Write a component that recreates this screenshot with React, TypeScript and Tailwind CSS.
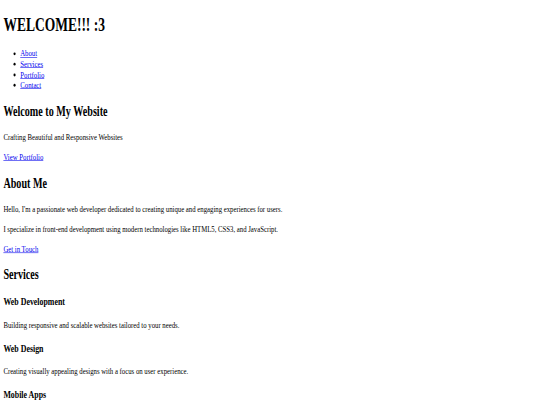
import React from "react";

const serif = { fontFamily: '"Liberation Serif", "Times New Roman", serif' };

export default function App() {
  const link = "text-[#0000EE] underline";
  const p = "text-base leading-[18.4px]";
  const h2 = "text-2xl font-bold leading-[27.6px]";
  const h3 = "text-[18.72px] font-bold leading-[21.5px]";
  return (
    <div className="w-[540px] h-[405px] overflow-hidden bg-white">
      <div
        className="w-[1280px] flow-root origin-top-left scale-x-[0.421875] scale-y-[0.57] text-black"
        style={serif}
      >
        <div className="px-2">
          <h1 className="text-[32px] font-bold leading-[36.8px] mt-[26.4px]">WELCOME!!! :3</h1>
          <nav>
            <ul className="list-disc pl-10 mt-[21.7px] text-base leading-[18.4px]">
              <li><a href="#about" className={link}>About</a></li>
              <li><a href="#services" className={link}>Services</a></li>
              <li><a href="#portfolio" className={link}>Portfolio</a></li>
              <li><a href="#contact" className={link}>Contact</a></li>
            </ul>
          </nav>
          <section>
            <h2 className={`${h2} mt-[23.15px]`}>Welcome to My Website</h2>
            <p className={`${p} mt-[22.3px]`}>Crafting Beautiful and Responsive Websites</p>
            <p className={`${p} mt-[16.15px]`}><a href="#portfolio" className={link}>View Portfolio</a></p>
          </section>
          <section>
            <h2 className={`${h2} mt-[24.5px]`}>About Me</h2>
            <p className={`${p} mt-[21.75px]`}>Hello, I'm a passionate web developer dedicated to creating unique and engaging experiences for users.</p>
            <p className={`${p} mt-[16px]`}>I specialize in front-end development using modern technologies like HTML5, CSS3, and JavaScript.</p>
            <p className={`${p} mt-[16.7px]`}><a href="#contact" className={link}>Get in Touch</a></p>
          </section>
          <section>
            <h2 className={`${h2} mt-[22.8px]`}>Services</h2>
            <div>
              <h3 className={`${h3} mt-[21.05px]`}>Web Development</h3>
              <p className={`${p} mt-[22.1px]`}>Building responsive and scalable websites tailored to your needs.</p>
            </div>
            <div>
              <h3 className={`${h3} mt-[21.2px]`}>Web Design</h3>
              <p className={`${p} mt-[20.1px]`}>Creating visually appealing designs with a focus on user experience.</p>
            </div>
            <div>
              <h3 className={`${h3} mt-[21.25px]`}>Mobile Apps</h3>
              <p className={`${p} mt-[22px]`}>Developing cross-platform mobile applications for iOS and Android.</p>
            </div>
          </section>
        </div>
      </div>
    </div>
  );
}
